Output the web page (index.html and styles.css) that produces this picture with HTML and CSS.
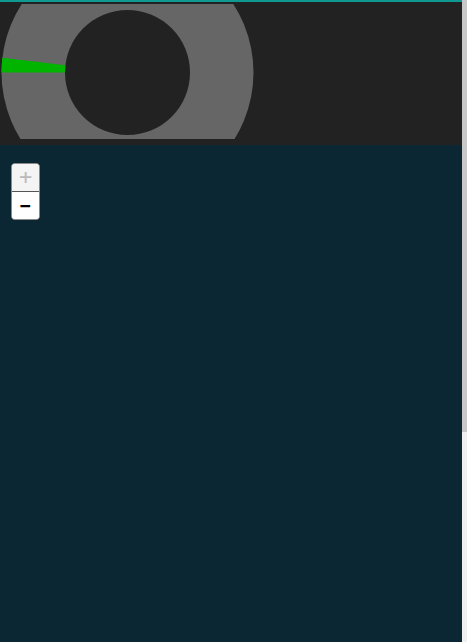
FILE: index.html
```html
<!DOCTYPE html>
<html>
<head>
<meta charset="utf-8">
<link rel="stylesheet" href="styles.css">
</head>
<body>
<header class="header">
  <svg class="donut" width="260" height="135" viewBox="0 0 260 135">
    <circle cx="127.5" cy="68.5" r="126" fill="#666666"/>
    <circle cx="127.5" cy="68.5" r="62.5" fill="#222222"/>
    <path d="M 1.5 68.5 A 126 126 0 0 1 2.36 53.8 L 65.43 61.21 A 62.5 62.5 0 0 0 65 68.5 Z" fill="#00b400"/>
  </svg>
</header>
<main class="map">
  <div class="zoom">
    <a class="zoom-btn disabled">+</a>
    <a class="zoom-btn minus">&#8722;</a>
  </div>
</main>
<div class="scrollbar" aria-hidden="true"><div class="scrollbar-thumb"></div></div>
</body>
</html>
```
FILE: styles.css
```css
html, body {
  margin: 0;
  padding: 0;
}
body {
  background: #0b2733;
  font-family: "Liberation Sans", Arial, sans-serif;
}
.header {
  border-top: 2px solid #0e9a93;
  background: #222222;
  height: 143px;
}
.donut {
  display: block;
  margin-top: 2px;
}
.map {
  height: 809px;
  background: #0b2733;
  padding: 18px 0 0 11px;
  box-sizing: border-box;
}
.zoom {
  display: flex;
  flex-direction: column;
  width: 27px;
  border: 1px solid #8a8a8a;
  border-radius: 4px;
  overflow: hidden;
  background: #fff;
}
.zoom-btn {
  display: block;
  height: 27px;
  line-height: 27px;
  text-align: center;
  font: bold 18px "DejaVu Sans Mono", "Liberation Mono", monospace;
  color: #000;
  background: #fff;
}
.zoom-btn.minus {
  border-top: 1px solid #555;
  line-height: 28px;
}
.zoom-btn.disabled {
  color: #bbb;
  background: #f4f4f4;
  font-weight: normal;
  font-size: 22px;
}
.scrollbar {
  position: fixed;
  top: 0;
  right: 0;
  width: 5px;
  height: 100%;
  background: #f0f0f0;
}
.scrollbar-thumb {
  height: 432px;
  background: #c8c8c8;
}
```
